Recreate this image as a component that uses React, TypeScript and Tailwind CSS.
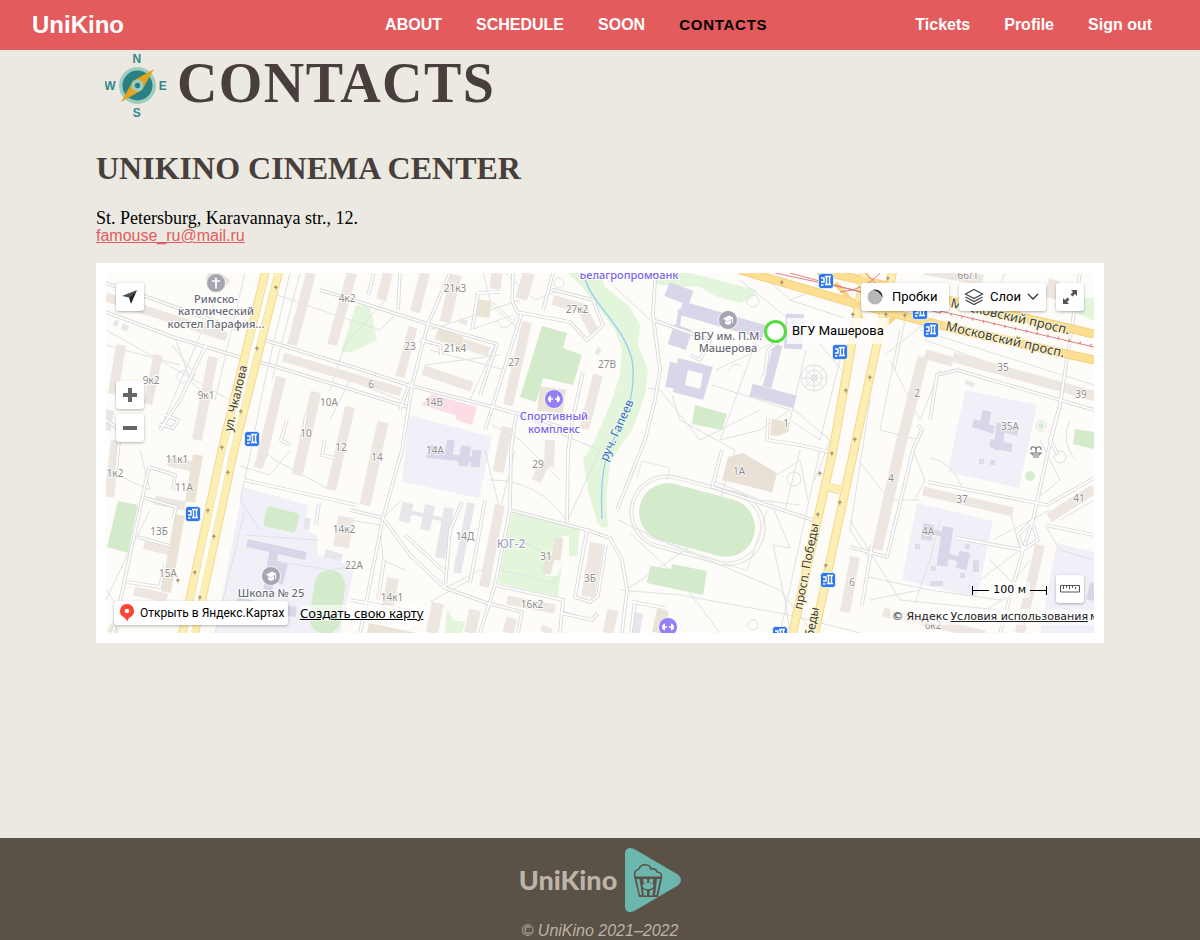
import React from "react";

type Bar = [points: string, width: number];
type Label = [text: string, x: number, y: number, rotate?: number];

const BUILDINGS: Bar[] = [
  ["106,297 227,337", 9], ["121,345 113,394", 10], ["158,355 148,404", 9], ["213,357 197,440", 10],
  ["311,273 292,345", 10], ["352,273 332,345", 10], ["283,357 401,392", 9], ["281,377 262,457", 10],
  ["316,392 297,475", 11], ["350,407 331,490", 10], ["383,422 365,505", 11], ["388,273 381,300", 10],
  ["425,273 415,312", 10], ["456,275 445,322", 11], ["413,327 400,377", 9], ["497,273 495,289", 11],
  ["529,273 521,299", 12], ["436,335 489,352", 10], ["423,370 472,387", 10], ["527,322 508,405", 10],
  ["553,300 582,308 594,332", 10], ["598,375 584,429", 10], ["507,427 498,472", 11], ["550,440 549,467", 10],
  ["545,463 536,481", 10], ["925,354 953,362", 10], ["953,357 1094,396", 10], ["923,357 899,452 877,550", 11],
  ["925,270 983,280", 10], ["1055,280 1050,298", 12], ["116,440 109,497", 10], ["168,461 195,467", 10],
  ["155,500 185,506", 9], ["144,545 175,553", 8], ["134,591 167,598", 9], ["115,626 112,633", 10],
  ["267,440 258,468", 9], ["346,517 341,547", 16], ["500,505 484,587", 10], ["597,543 588,597", 14],
  ["393,578 388,607", 12], ["438,603 432,633", 12], ["475,610 470,633", 12], ["512,618 508,633", 11],
  ["507,600 555,609", 9], ["548,627 545,633", 11], ["613,610 608,633", 11], ["600,548 598,570", 2],
  ["855,557 845,612", 10], ["923,491 1013,512", 9], ["1049,518 1094,489", 10], ["1040,545 1020,633", 10],
  ["883,612 985,635", 9],
];

const TAN: Bar[] = [
  ["485,300 483,317", 13], ["437,333 462,341", 9], ["198,455 190,502", 10], ["180,515 166,592", 10],
  ["663,610 658,633", 12], ["368,628 416,638", 10], ["209,273 226,286", 14], ["553,388 550,412", 26],
];

const GREY: Bar[] = [
  ["408,503 404,522", 11], ["430,505 425,530", 10], ["449,508 440,558", 10], ["408,512 446,520", 4],
  ["471,503 457,573", 8], ["639,613 635,633", 9], ["325,553 342,558", 8], ["308,518 306,530", 6],
  ["110,410 106,430", 9], ["114,322 118,324", 6], ["122,326 128,329", 6], ["459,320 467,323", 5],
  ["596,350 600,352", 7], ["965,382 974,385", 4],
];

const CAMPUS = [
  "409,415 492,437 479,498 402,482",
  "965,390 1037,405 1019,488 948,472",
  "243,487 308,505 304,530 317,535 318,555 355,566 340,633 215,633",
  "917,503 993,521 977,597 902,580",
  "1057,543 1094,552 1094,633 1040,633",
];

const CAMPUS_BUILDINGS: Bar[] = [
  ["667,289 691,298", 15], ["681,308 764,332", 14], ["680,309 678,327", 4], ["671,334 689,340", 21],
  ["676,363 671,388", 12], ["795,314 793,349", 18], ["778,345 767,387", 9], ["751,390 795,402", 13],
  ["427,455 480,460", 6], ["435,446 433,454", 9], ["451,440 448,458", 8], ["466,446 463,466", 10],
  ["477,450 475,467", 9], ["247,543 306,556", 8], ["274,550 268,590", 9], ["279,562 274,582", 18],
  ["237,603 296,612", 10], ["987,411 984,425", 9], ["973,423 994,430", 8], ["1001,423 998,450", 9],
  ["1003,428 1018,432", 8], ["990,443 1012,448", 8], ["929,524 926,540", 11], ["926,530 945,535", 5],
  ["948,527 942,566", 11], ["945,555 962,560", 5], ["965,552 961,569", 11], ["1094,583 1090,600", 8],
];

const LIGHT_GREEN = [
  "568,273 585,290 600,310 615,330 622,350 620,375 612,400 595,440 583,460 588,490 597,522 602,528 608,527 606,500 610,462 632,430 645,395 648,370 638,345 640,325 628,305 605,287 600,273",
  "341,352 356,305 370,306 377,340 352,352",
  "640,273 690,273 757,290 752,298 740,303 715,296 700,287 660,285",
  "512,512 580,528 577,557 563,555 558,597 498,583",
  "447,608 453,620 465,622 462,633 445,633",
  "1078,298 1094,298 1094,321 1072,311",
];

const GREEN = [
  "542,326 567,333 563,348 582,355 573,385 543,378 536,402 520,397",
  "695,405 727,414 722,430 692,424",
  "118,501 138,505 128,553 107,547",
  "650,566 671,569 672,564 707,571 703,595 647,583",
  "1075,429 1094,432 1094,449 1073,444",
];

const STREETS = [
  "106,283 150,298 240,330", "106,312 173,337 239,357 260,362 356,391 407,407", "264,340 356,368 408,385 493,407 523,415 570,430",
  "350,299 428,324 497,344 480,395", "550,289 593,300 603,325 587,340 570,322 517,312 512,300 513,273",
  "450,273 428,324 412,385 402,450 383,518 360,633", "522,312 493,405 485,430", "350,299 320,290",
  "350,510 383,518 410,555 445,588 487,603 522,612 518,633", "511,450 510,510 495,585 480,633",
  "511,450 516,415", "510,510 587,530 610,538 622,560 627,590 622,633", "495,585 563,600 560,633",
  "587,530 575,597 590,602 598,596 606,545", "583,372 572,422 568,452 567,522", "655,280 653,315 660,370 655,400 645,440 617,510",
  "722,450 712,487 813,520", "928,482 1047,505 1094,478", "1080,273 1060,405 1048,452 1033,520 1023,550 1000,633",
  "930,420 937,375 957,370 1094,410", "913,450 887,557 850,547", "957,538 1023,550", "244,480 356,505",
  "149,467 121,597 113,633", "149,467 175,475 173,490", "142,497 176,507 173,520", "138,537 170,546", "127,582 160,587 165,565",
  "319,503 316,525", "206,345 180,400 160,430", "374,273 368,295", "400,273 398,310", "472,330 478,293 500,292",
  "553,273 543,310", "410,383 400,410", "445,588 450,530 462,502", "405,535 445,572", "470,583 478,540 485,500",
  "768,418 767,440 800,445 830,452", "653,320 710,340 700,360 690,355", "765,375 768,350 775,345", "560,613 592,620 598,613",
  "306,415 302,440", "287,420 281,440 290,445", "159,424 173,428 178,420 165,415", "325,440 322,455 335,458", "106,420 120,430 116,470",
  "1060,405 1050,440 1058,455", "913,450 922,430 918,425", "1045,525 1094,535", "1033,520 1018,535 1023,550 1038,540 1033,525",
  "635,600 631,633", "632,602 665,608", "384,560 378,600", "350,600 415,612", "872,545 862,605", "420,340 440,345 441,355",
];

const PATHS = [
  "M106 330L230 400L256 350", "M160 430L215 300", "M175 338L190 380L210 400", "M172 345L195 375L178 400", "M245 273L215 400",
  "M290 273L265 380L250 455", "M300 273L272 380", "M245 510L215 633", "M250 455L240 500L260 530", "M262 290L350 320", "M106 345L180 365",
  "M350 320L380 330L395 315", "M385 300L345 345L330 390", "M470 330L513 315", "M483 273L490 300L512 320", "M430 330L520 300", "M485 300L520 330",
  "M425 365L500 355", "M430 350L505 370", "M495 345L470 400", "M497 320Q505 340 520 310", "M505 273L535 300L560 290",
  "M523 415L550 430L600 450", "M492 425L520 440L560 480", "M485 450L500 510L515 450", "M490 480Q540 480 567 522L600 450",
  "M383 518L402 500", "M350 520L380 525L383 560L405 570", "M445 588L480 570L495 585", "M430 602L470 580", "M600 273L650 320",
  "M648 388L660 390L700 440L760 410", "M672 395L680 420L735 450", "M716 370L800 330", "M712 385L790 410L760 430L720 440L735 400", "M740 280L790 320L760 380",
  "M735 400L760 330", "M735 450L720 500", "M790 300L850 320L820 440", "M806 350L790 420L820 440", "M800 320L850 380", "M793 409L830 440L815 480",
  "M618 520L660 540L780 590L813 633", "M630 533L680 580L720 633", "M620 590L680 595L790 615L860 633", "M626 590L700 540", "M773 545L790 548L770 500", "M773 545L785 600L790 633",
  "M712 480L760 500L800 505", "M777 475L800 460L808 500", "M800 450L785 510", "M820 450L780 633", "M860 300L850 360", "M850 450L890 500L920 500",
  "M900 330L880 430L920 440", "M885 355L935 315", "M890 360L920 420L940 370", "M905 320L895 370", "M870 400L850 530L870 560", "M920 330L1094 385",
  "M925 340L1094 400", "M850 520L900 600L1000 610", "M868 577L930 590L1000 600L1030 560", "M915 603L930 560L940 520", "M870 600L920 590",
  "M930 458Q950 460 962 487", "M913 450L925 480L915 500", "M993 540L1050 510", "M990 560L1020 590L985 610", "M1010 510L1020 550L980 580",
  "M1045 525L1060 550L1094 560", "M1060 520L1094 500", "M1040 440L1060 480L1035 500", "M1070 420Q1060 440 1075 460", "M1005 273L990 310",
  "M106 600L125 560L150 510", "M106 470L150 490L140 450", "M120 610L106 590", "M225 500L205 600", "M200 560L190 633",
  "M250 440L275 460L330 490", "M240 466L270 475L290 450", "M330 420L350 380L400 400", "M270 560L330 570L355 566", "M245 535L318 540",
  "M560 555L555 583L500 570", "M520 540L558 560", "M860 273L890 320", "M760 273L790 300L815 290",
];

const LABELS: Label[] = [
  ["4к2", 347, 302], ["21к3", 455, 292], ["27к2", 577, 313], ["23", 410, 350], ["21к4", 455, 352], ["27", 514, 366], ["6", 371, 388],
  ["27В", 607, 368], ["9к2", 151, 384], ["9к1", 206, 399], ["10А", 329, 406], ["14В", 434, 406], ["10", 306, 437], ["12", 341, 451],
  ["14", 377, 461], ["14А", 435, 454], ["29", 538, 468], ["11к1", 177, 463], ["1к2", 115, 477], ["11А", 184, 491], ["13Б", 159, 535],
  ["15А", 168, 577], ["14к2", 344, 533], ["22А", 354, 569], ["14Д", 465, 540], ["31", 546, 560], ["3Б", 590, 582], ["14к1", 392, 601],
  ["16к2", 532, 608], ["1", 786, 427], ["1А", 739, 475], ["66/1", 968, 279], ["35", 1003, 371], ["2", 917, 397], ["39", 1081, 398],
  ["35А", 1010, 430], ["4", 891, 482], ["37", 962, 503], ["41", 1079, 502], ["4А", 928, 535], ["6", 852, 586], ["6к2", 933, 629],
];

const STOPS: [number, number][] = [
  [826, 281], [920, 312], [931, 330], [840, 352], [252, 439], [193, 514], [828, 580], [780, 634],
];

const ARROWS: [number, number][] = [
  [276, 288], [257, 349], [241, 412], [222, 448], [228, 473], [208, 511], [214, 537], [195, 573], [200, 598], [178, 581],
  [782, 283], [888, 279], [886, 315], [870, 378], [846, 391], [855, 440], [832, 454], [820, 474], [840, 503], [818, 515], [826, 566], [853, 315], [905, 316],
];

function Bars({ items, color }: { items: Bar[]; color: string }) {
  return (
    <g fill="none" stroke={color}>
      {items.map(([points, width]) => (
        <polyline key={points} points={points} strokeWidth={width} />
      ))}
    </g>
  );
}

function Areas({ items, color }: { items: string[]; color: string }) {
  return (
    <g fill={color}>
      {items.map((points) => (
        <polygon key={points} points={points} />
      ))}
    </g>
  );
}

function CityMap() {
  return (
    <svg
      viewBox="106 273 988 360"
      preserveAspectRatio="xMidYMid slice"
      className="block h-[360px] w-full font-['Noto_Sans',sans-serif]"
      role="img"
      aria-label="Карта"
    >
      <rect x="106" y="273" width="988" height="360" fill="#fdfcf8" />
      <Areas items={CAMPUS} color="#f1f0f8" />
      <Areas items={LIGHT_GREEN} color="#e3f6db" />
      <Areas items={GREEN} color="#d3eacb" />
      <path d="M268 507q2-1 4 0l24 6q4 1 3 5l-3 11q-1 4-5 3l-23-5q-5-1-4-6l2-10z" fill="#d3eacb" />
      <rect x="312" y="570" width="31" height="64" rx="15" transform="rotate(8 328 602)" fill="#d3eacb" />
      <rect x="629" y="483" width="137" height="74" rx="37" transform="rotate(15 697 520)" fill="#fdfcf8" stroke="#d9dddd" />
      <rect x="632" y="486" width="130" height="68" rx="34" transform="rotate(15 697 520)" fill="none" stroke="#e2e3e3" />
      <rect x="638" y="491" width="118" height="58" rx="29" transform="rotate(15 697 520)" fill="#d3eacb" />
      <path d="M637 478l5-17 28 7-3 12M767 510l-20 61-100-35" fill="none" stroke="#e8e4df" />
      <g fill="none" stroke="#dde2e3">
        {PATHS.map((d) => (
          <path key={d} d={d} />
        ))}
        <circle cx="183" cy="377" r="6" />
        <circle cx="559" cy="283" r="5" />
        <circle cx="753" cy="301" r="6" />
        <circle cx="814" cy="378" r="13" />
        <circle cx="814" cy="378" r="8" />
        <circle cx="814" cy="378" r="3" />
        <path d="M801 378h26M814 365v26M805 369l18 18M823 369l-18 18" />
        <circle cx="794" cy="479" r="7" />
        <circle cx="753" cy="625" r="5" />
        <circle cx="1060" cy="457" r="6" />
        <path d="M728 372q5-12 13-6M560 610l30 10" />
      </g>
      <path d="M556 548l6-12h7v28l-8 2-4 10h-11l3-22z" fill="#fdfcf8" />
      <Bars items={BUILDINGS} color="#eee7e1" />
      <Bars items={[["559,538 556,560", 9], ["551,555 546,574", 9]]} color="#eae3da" />
      <Bars items={TAN} color="#eae3d6" />
      <Bars items={GREY} color="#e8e6ea" />
      <polygon points="728,457 743,453 777,473 772,493 767,491 722,480" fill="#e9e1d6" />
      <polygon points="772,419 790,422 788,432 778,436 770,435" fill="#e9e1d6" />
      <polygon points="432,394 477,407 472,425 457,420 455,415 421,405" fill="#fbdde6" />
      <Bars items={CAMPUS_BUILDINGS} color="#d8d6e9" />
      <path fillRule="evenodd" d="M678 358l35 9-10 33-30-8zM688 370l-3 15 15 4 3-15z" fill="#d8d6e9" />
      <circle cx="1041" cy="426" r="5" fill="none" stroke="#d8dddc" />
      <circle cx="1041" cy="426" r="3" fill="#d3efcf" />
      <circle cx="1030" cy="476" r="5" fill="#d3efcf" />
      <g fill="#dedbe7">
        <rect x="979" y="459" width="5" height="5" />
        <rect x="990" y="460" width="5" height="5" />
        <rect x="915" y="544" width="5" height="5" />
        <rect x="965" y="544" width="5" height="5" />
        <rect x="973" y="560" width="6" height="12" />
        <rect x="931" y="566" width="5" height="5" />
        <rect x="960" y="573" width="5" height="5" />
        <rect x="930" y="581" width="13" height="5" />
      </g>

      <path d="M585 278C590 302 624 325 632 360C636 385 630 410 616 435C604 455 600 480 602 519" fill="none" stroke="#94cdf0" strokeWidth="1.3" />

      <g fill="none" strokeLinejoin="round">
        {STREETS.map((points) => (
          <polyline key={points} points={points} stroke="#d9d9d9" strokeWidth="3.6" />
        ))}
        {STREETS.map((points) => (
          <polyline key={points} points={points} stroke="#ffffff" strokeWidth="1.8" />
        ))}
      </g>

      <g fill="none">
        <g stroke="#f3d88d" strokeWidth="9">
          <path d="M266 270L222 450L182 636M279 270L234 450L194 636" />
          <path d="M865 270L833 450L792 636M893 270L854 450L814 636M824 486L840 490M195 585l8 2" />
        </g>
        <path d="M740 270L860 305L960 330L1094 360M818 270L900 289L1094 334" stroke="#f5cf7c" strokeWidth="9" />
        <path d="M835 283Q853 300 862 320M880 330Q890 322 900 310" stroke="#f6d584" strokeWidth="5" />
        <g stroke="#fdefb3" strokeWidth="7">
          <path d="M266 270L222 450L182 636M279 270L234 450L194 636" />
          <path d="M865 270L833 450L792 636M893 270L854 450L814 636M824 486L840 490" />
        </g>
        <path d="M740 270L860 305L960 330L1094 360M818 270L900 289L1094 334" stroke="#fcdf93" strokeWidth="7" />
        <path d="M272 273L228 450L189 633" stroke="#ffffff" strokeWidth="4" />
        <g stroke="#dd7478" strokeWidth="0.9">
          <path d="M775 273L850 289L940 311L1094 347M790 273L860 292L940 313M840 292Q865 290 880 273M865 273Q880 285 884 298" />
        </g>
        <path d="M940 312L1094 346" stroke="#dd7478" strokeWidth="3" strokeDasharray="1 10" />
      </g>

      <g fill="#a99d78">
        {ARROWS.map(([x, y]) => (
          <path key={`${x}-${y}`} d={`M${x} ${y - 3}l2 3h-1.400l-.6 3-1-3h-1.500z`} />
        ))}
      </g>

      <g fontSize="10" fill="#8d8a88" textAnchor="middle" stroke="#ffffff" strokeWidth="1.5" paintOrder="stroke">
        {LABELS.map(([text, x, y]) => (
          <text key={`${text}-${x}`} x={x} y={y}>{text}</text>
        ))}
      </g>

      <g fontSize="12" fill="#3c3c3c" stroke="#fff6d0" strokeWidth="2" paintOrder="stroke">
        <text transform="translate(232 432) rotate(-77)">ул. Чкалова</text>
        <text transform="translate(802 610) rotate(-79)">просп. Победы</text>
        <text transform="translate(819 608) rotate(-79)" textAnchor="end">просп. Победы</text>
        <g fontSize="13">
          <text transform="translate(950 307) rotate(13)">Московский просп.</text>
          <text transform="translate(945 330) rotate(13)">Московский просп.</text>
        </g>
        <text transform="translate(607 462) rotate(-66)" fill="#3570bb" stroke="#eefaf0">руч. Гапеев</text>
      </g>

      <g fontSize="11" fontWeight="500" textAnchor="middle" stroke="#ffffff" strokeWidth="2" paintOrder="stroke">
        <g fill="#6b6d77">
          <text x="216" y="303">Римско-</text>
          <text x="216" y="315">католический</text>
          <text x="216" y="328">костел Парафия...</text>
          <text x="728" y="340">ВГУ им. П.М.</text>
          <text x="728" y="352">Машерова</text>
          <text x="271" y="597">Школа № 25</text>
        </g>
        <g fill="#7a63e6">
          <text x="554" y="420">Спортивный</text>
          <text x="554" y="433">комплекс</text>
          <text x="629" y="279">Белагропромбанк</text>
        </g>
        <text x="511" y="548" fontSize="12" fill="#a3a3c2">ЮГ-2</text>
      </g>

      <g fill="#a5a6b0" stroke="#ffffff" strokeWidth="0.8">
        <circle cx="216" cy="283" r="9.500" />
        <circle cx="728" cy="320" r="9.500" />
        <circle cx="271" cy="576" r="9.500" />
      </g>
      <path d="M216 277.500v11M212 281h8" stroke="#fff" strokeWidth="1.700" fill="none" />
      {[[728, 320], [271, 576]].map(([x, y]) => (
        <path key={x} transform={`translate(${x} ${y})`} d="M-5-1.500L1-4.500 5-2.500V3H4V-1L-1 1.500zM-3 1l2 1 4-2v3.500l-3 1.500-3-1.500z" fill="#fff" />
      ))}
      {[[554, 399], [668, 627]].map(([x, y]) => (
        <g key={x} transform={`translate(${x} ${y})`}>
          <circle r="9.500" fill="#957ff5" stroke="#fff" strokeWidth="0.800" />
          <path d="M-3-3.500v7q-3-1-3-3.500t3-3.500zM3-3.500v7q3-1 3-3.500t-3-3.500z" fill="#fff" />
          <path d="M-3 0h2M1 0h2" stroke="#fff" strokeWidth="1.500" />
        </g>
      ))}
      {STOPS.map(([x, y]) => (
        <g key={`${x}-${y}`} transform={`translate(${x} ${y})`}>
          <rect x="-7.500" y="-7.500" width="15" height="15" rx="3" fill="#3078ea" stroke="#fff" strokeWidth="0.700" />
          <path d="M-1-4.500h6M.5-4.500v7.500M3.500-4.500v7.500M-1 3.500h6M-5-3h3v4h-3M-5 4h2.500" stroke="#fff" strokeWidth="1.400" fill="none" />
        </g>
      ))}
      <path d="M1031 450q0-4 3-3 2 0 2 3 0-3 2-3 3-1 3 3M1036 447v6M1031 453h10l-2 2h-6zM1033 457h6" stroke="#77777f" strokeWidth="1.200" fill="none" />
    </svg>
  );
}

const control =
  "absolute flex h-7 cursor-pointer items-center rounded-[3px] bg-white shadow-[0_1px_3px_rgba(0,0,0,0.3)]";

function MapPanel() {
  return (
    <section className="mt-[18px] bg-white p-[10px]">
      <div className="relative overflow-hidden font-['Liberation_Sans',Arial,sans-serif] text-[13px] text-black">
        <CityMap />

        <div className="absolute top-[45px] left-[658px] flex items-center">
          <span className="h-[23px] w-[23px] rounded-full border-[3px] border-[#56db40] bg-white" />
          <span className="bg-white/75 px-[5px] py-1 font-['Roboto',sans-serif] text-[13px] leading-[18px]">ВГУ Машерова</span>
        </div>

        <button type="button" aria-label="Моё местоположение" className={`${control} top-[10px] left-[10px] w-7 justify-center`}>
          <svg width="16" height="16" viewBox="0 0 16 16" fill="#4d4d4d">
            <path d="M15 1L0 7l7 1.500z" />
            <path d="M15 1L7 8.500 9 15z" fill="#222" />
          </svg>
        </button>
        <button type="button" aria-label="Приблизить" className={`${control} top-[108px] left-[10px] w-7 justify-center`}>
          <svg width="14" height="14" viewBox="0 0 14 14" fill="#666"><path d="M5 0h4v5h5v4H9v5H5V9H0V5h5z" /></svg>
        </button>
        <button type="button" aria-label="Отдалить" className={`${control} top-[141px] left-[10px] w-7 justify-center`}>
          <svg width="14" height="14" viewBox="0 0 14 14" fill="#666"><path d="M0 5h14v4H0z" /></svg>
        </button>

        <div className="absolute top-[10px] right-[10px] flex gap-[10px] font-['Roboto',sans-serif]">
          <button type="button" className={`${control} static! w-[88px] gap-2 pl-[6px]`}>
            <svg width="17" height="16" viewBox="0 0 17 16">
              <circle cx="8" cy="8" r="7.500" fill="#b8b8b8" />
              <path d="M6 .8A7.500 7.500 0 0 1 15.500 8.500Q12 2 6 .8z" fill="#222" />
            </svg>
            Пробки
          </button>
          <button type="button" className={`${control} static! w-[87px] gap-[6px] pl-[5px]`}>
            <svg width="20" height="18" viewBox="0 0 20 18" fill="none" stroke="#444" strokeWidth="1.200">
              <path d="M10 1.500L18.500 6 10 10.500 1.500 6zM1.500 9L10 13.500 18.500 9M1.500 12L10 16.500 18.500 12" />
            </svg>
            Слои
            <svg width="12" height="8" viewBox="0 0 12 8" fill="none" stroke="#333" strokeWidth="1.300">
              <path d="M1 1l5 5 5-5" />
            </svg>
          </button>
          <button type="button" aria-label="На весь экран" className={`${control} static! w-7 justify-center`}>
            <svg width="14" height="14" viewBox="0 0 14 14" fill="#555">
              <path d="M8 0h6v6l-2-2-2.500 2.500-2-2L10 2zM6 14H0V8l2 2 2.500-2.500 2 2L4 12z" />
            </svg>
          </button>
        </div>

        <a href="#maps" className={`${control} bottom-2 left-2 h-6! w-[174px] gap-[6px] pl-[6px] font-['Roboto',sans-serif] text-[12px] whitespace-nowrap`}>
          <svg width="14" height="18" viewBox="0 0 14 18">
            <path d="M7 0a7 7 0 0 1 3 13.300Q8 14.500 7 17.500 6 14.500 4 13.300A7 7 0 0 1 7 0z" fill="#f43" />
            <circle cx="7" cy="7" r="2.300" fill="#fff" />
          </svg>
          Открыть в Яндекс.Картах
        </a>
        <a href="#constructor" className="absolute bottom-[12px] left-[194px] bg-white/60 font-['Noto_Sans',sans-serif] text-[13px] leading-4 underline">
          Создать свою карту
        </a>

        <div className="absolute right-[47px] bottom-[35px] flex items-center font-['DejaVu_Sans',sans-serif] text-[11px] leading-4">
          <span className="flex h-[9px] w-[17px] items-center border-l border-black"><span className="h-px w-full bg-black" /></span>
          <span className="bg-white/60 px-1">100 м</span>
          <span className="flex h-[9px] w-[17px] items-center border-r border-black"><span className="h-px w-full bg-black" /></span>
        </div>
        <button type="button" aria-label="Линейка" className={`${control} right-[10px] bottom-[30px] w-7 justify-center`}>
          <svg width="20" height="8" viewBox="0 0 20 8" fill="none" stroke="#555">
            <path d="M.5.5h19v6.500H.500zM3.500 1v3M6.500 1v2M9.500 1v3M12.500 1v2M15.500 2v2" />
          </svg>
        </button>
        <div className="absolute right-0 bottom-2 flex w-[204px] gap-[2px] overflow-hidden bg-white/60 pl-[2px] font-['DejaVu_Sans',sans-serif] text-[11px] leading-4 whitespace-nowrap text-[#222]">
          <span>© Яндекс</span>
          <a href="#terms" className="underline">Условия использования</a>
          <span>м</span>
        </div>
      </div>
    </section>
  );
}

function Compass() {
  return (
    <svg width="64" height="68" viewBox="0 0 64 68" className="shrink-0 font-['Liberation_Sans_Narrow','Liberation_Sans',Arial,sans-serif]" aria-hidden="true">
      <circle cx="32.500" cy="34.500" r="18.500" fill="#9dcdbd" />
      <circle cx="32.500" cy="34.500" r="15" fill="#2b8083" />
      <path d="M49 18L37 39 16 51 28 30z" fill="#e2a41c" />
      <circle cx="32.500" cy="34.500" r="6" fill="#9dcdbd" />
      <circle cx="32.500" cy="34.500" r="2.700" fill="#2b8083" />
      <g fill="#35868a" fontSize="12" fontWeight="700" textAnchor="middle">
        <text x="32.500" y="12">N</text>
        <text x="32.500" y="66">S</text>
        <text x="5.500" y="39">W</text>
        <text x="58.500" y="39">E</text>
      </g>
    </svg>
  );
}

function FooterMark() {
  return (
    <svg width="56" height="64" viewBox="0 0 56 64" aria-hidden="true">
      <path d="M0 6Q0 0 5 0q3 0 6 2l41 24q4 3 4 6t-4 6L11 62q-3 2-6 2-5 0-5-6z" fill="#6bb7ae" />
      <g fill="none" stroke="#5a5147" strokeWidth="1.500">
        <path d="M10 29q-2-6 4-8 2-5 7-4 4 0 5 4 5-1 6 3 6 1 4 5" />
      </g>
      <path d="M9 28.500h28.500L33 49H14z" fill="#5a5147" />
      <path d="M11.500 31h3l2.500 16h-2zM18 31h4l.5 3-3.500 2zM28.500 31h-4l-.5 3 3.500 2zM18 41l4 2v4.500h-3zM28.500 41l-4 2v4.500h3zM35 31h-3l-2 16h1.500z" fill="#6bb7ae" />
      <ellipse cx="23" cy="38" rx="5.500" ry="3.300" fill="#6bb7ae" />
    </svg>
  );
}

const sections = ["ABOUT", "SCHEDULE", "SOON"];
const account = ["Tickets", "Profile", "Sign out"];

export default function App() {
  return (
    <div className="flex min-h-screen flex-col bg-[#ebe9e2] font-['Liberation_Sans',Arial,sans-serif]">
      <header className="flex h-[50px] items-center bg-[#e45b5d] pr-12 pl-8 text-[16px] font-bold text-white">
        <a href="#home" className="text-[24px] leading-7">UniKino</a>
        <nav className="mr-[148px] ml-auto flex items-center gap-[34px]">
          {sections.map((name) => (
            <a key={name} href={`#${name.toLowerCase()}`}>{name}</a>
          ))}
          <a href="#contacts" aria-current="page" className="text-[15px] tracking-wider text-black">CONTACTS</a>
        </nav>
        <nav className="flex gap-[34px]">
          {account.map((name) => (
            <a key={name} href={`#${name.toLowerCase().replace(" ", "-")}`}>{name}</a>
          ))}
        </nav>
      </header>

      <main className="mx-[8%] flex-1 font-['Liberation_Serif','Times_New_Roman',serif]">
        <h1 className="flex items-start gap-2 pt-[1px] pl-[9px] text-[56px] leading-[64px] font-bold tracking-wide text-[#483f3d]">
          <Compass />
          CONTACTS
        </h1>
        <h2 className="mt-[31px] text-[32px] leading-9 font-bold text-[#483f3d]">UNIKINO CINEMA CENTER</h2>
        <p className="mt-[23px] text-[18px] leading-[18px] text-black">St. Petersburg, Karavannaya str., 12.</p>
        <a href="mailto:famouse_ru@mail.ru" className="block w-fit font-['Liberation_Sans',Arial,sans-serif] text-[16px] leading-[18px] text-[#e45b5d] underline">
          famouse_ru@mail.ru
        </a>
        <MapPanel />
      </main>

      <footer className="flex h-[102px] flex-col items-center bg-[#5a5147] pt-[10px] text-[#bdb3a7]">
        <div className="flex items-center gap-2">
          <span className="font-['Lato',sans-serif] text-[27px] leading-8 font-black">UniKino</span>
          <FooterMark />
        </div>
        <p className="mt-[10px] text-[16px] leading-[18px] italic">© UniKino 2021–2022</p>
      </footer>
    </div>
  );
}
